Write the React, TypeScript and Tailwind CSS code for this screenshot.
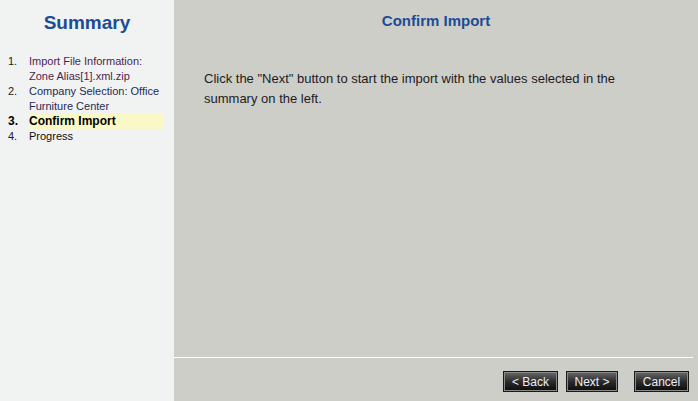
const steps = [
  { n: '1.', label: 'Import File Information: Zone Alias[1].xml.zip', color: 'text-[#4f1f4f]' },
  { n: '2.', label: 'Company Selection: Office Furniture Center', color: 'text-[#1f2a5a]' },
  { n: '3.', label: 'Confirm Import', current: true },
  { n: '4.', label: 'Progress', color: 'text-[#111]' },
]

function WizButton({ label, className = '' }: { label: string; className?: string }) {
  return (
    <button
      className={`h-[21px] border border-[#1a1a1a] bg-gradient-to-b from-[#6a6a6a] via-[#2c2c2c] to-[#0c0c0c] text-[12px] leading-none text-[#e8eef8] shadow-[inset_0_0_0_1px_#8a8a8a] ${className}`}
    >
      {label}
    </button>
  )
}

export default function App() {
  return (
    <div className="flex h-[401px] w-[698px] font-['Liberation_Sans',Arial,sans-serif]">
      <aside className="w-[174px] shrink-0 bg-[#f1f2f2]">
        <h1 className="pt-[11px] text-center text-[19px] font-bold leading-[24px] text-[#1b4c96]">Summary</h1>
        <ol className="mt-[19px] pr-[10px] text-[11px] leading-[15px]">
          {steps.map((s) => (
            <li key={s.n} className="flex">
              <span className={`w-[29px] shrink-0 pl-[8px] ${s.current ? 'text-[12px] font-bold text-black' : 'text-[#222]'}`}>{s.n}</span>
              <span
                className={
                  s.current
                    ? 'flex-1 bg-[#fbf8c8] text-[12px] font-bold text-black'
                    : `flex-1 ${s.color}`
                }
              >
                {s.label}
              </span>
            </li>
          ))}
        </ol>
      </aside>
      <main className="flex flex-1 flex-col bg-[#cdcec8]">
        <h2 className="pt-[11px] text-center text-[15px] font-bold leading-[20px] text-[#1b4c96]">Confirm Import</h2>
        <p className="mt-[38px] px-[30px] text-[13px] leading-[20px] text-[#1e1a1e]">
          Click the "Next" button to start the import with the values selected in the summary on the left.
        </p>
        <div className="flex-1" />
        <div className="mr-[5px] h-[1px] bg-white" />
        <div className="flex h-[43px] items-start pt-[13px] pr-[9px]">
          <div className="flex-1" />
          <WizButton label="< Back" className="w-[55px]" />
          <WizButton label="Next >" className="ml-[8px] w-[52px]" />
          <WizButton label="Cancel" className="ml-[16px] w-[55px]" />
        </div>
      </main>
    </div>
  )
}
